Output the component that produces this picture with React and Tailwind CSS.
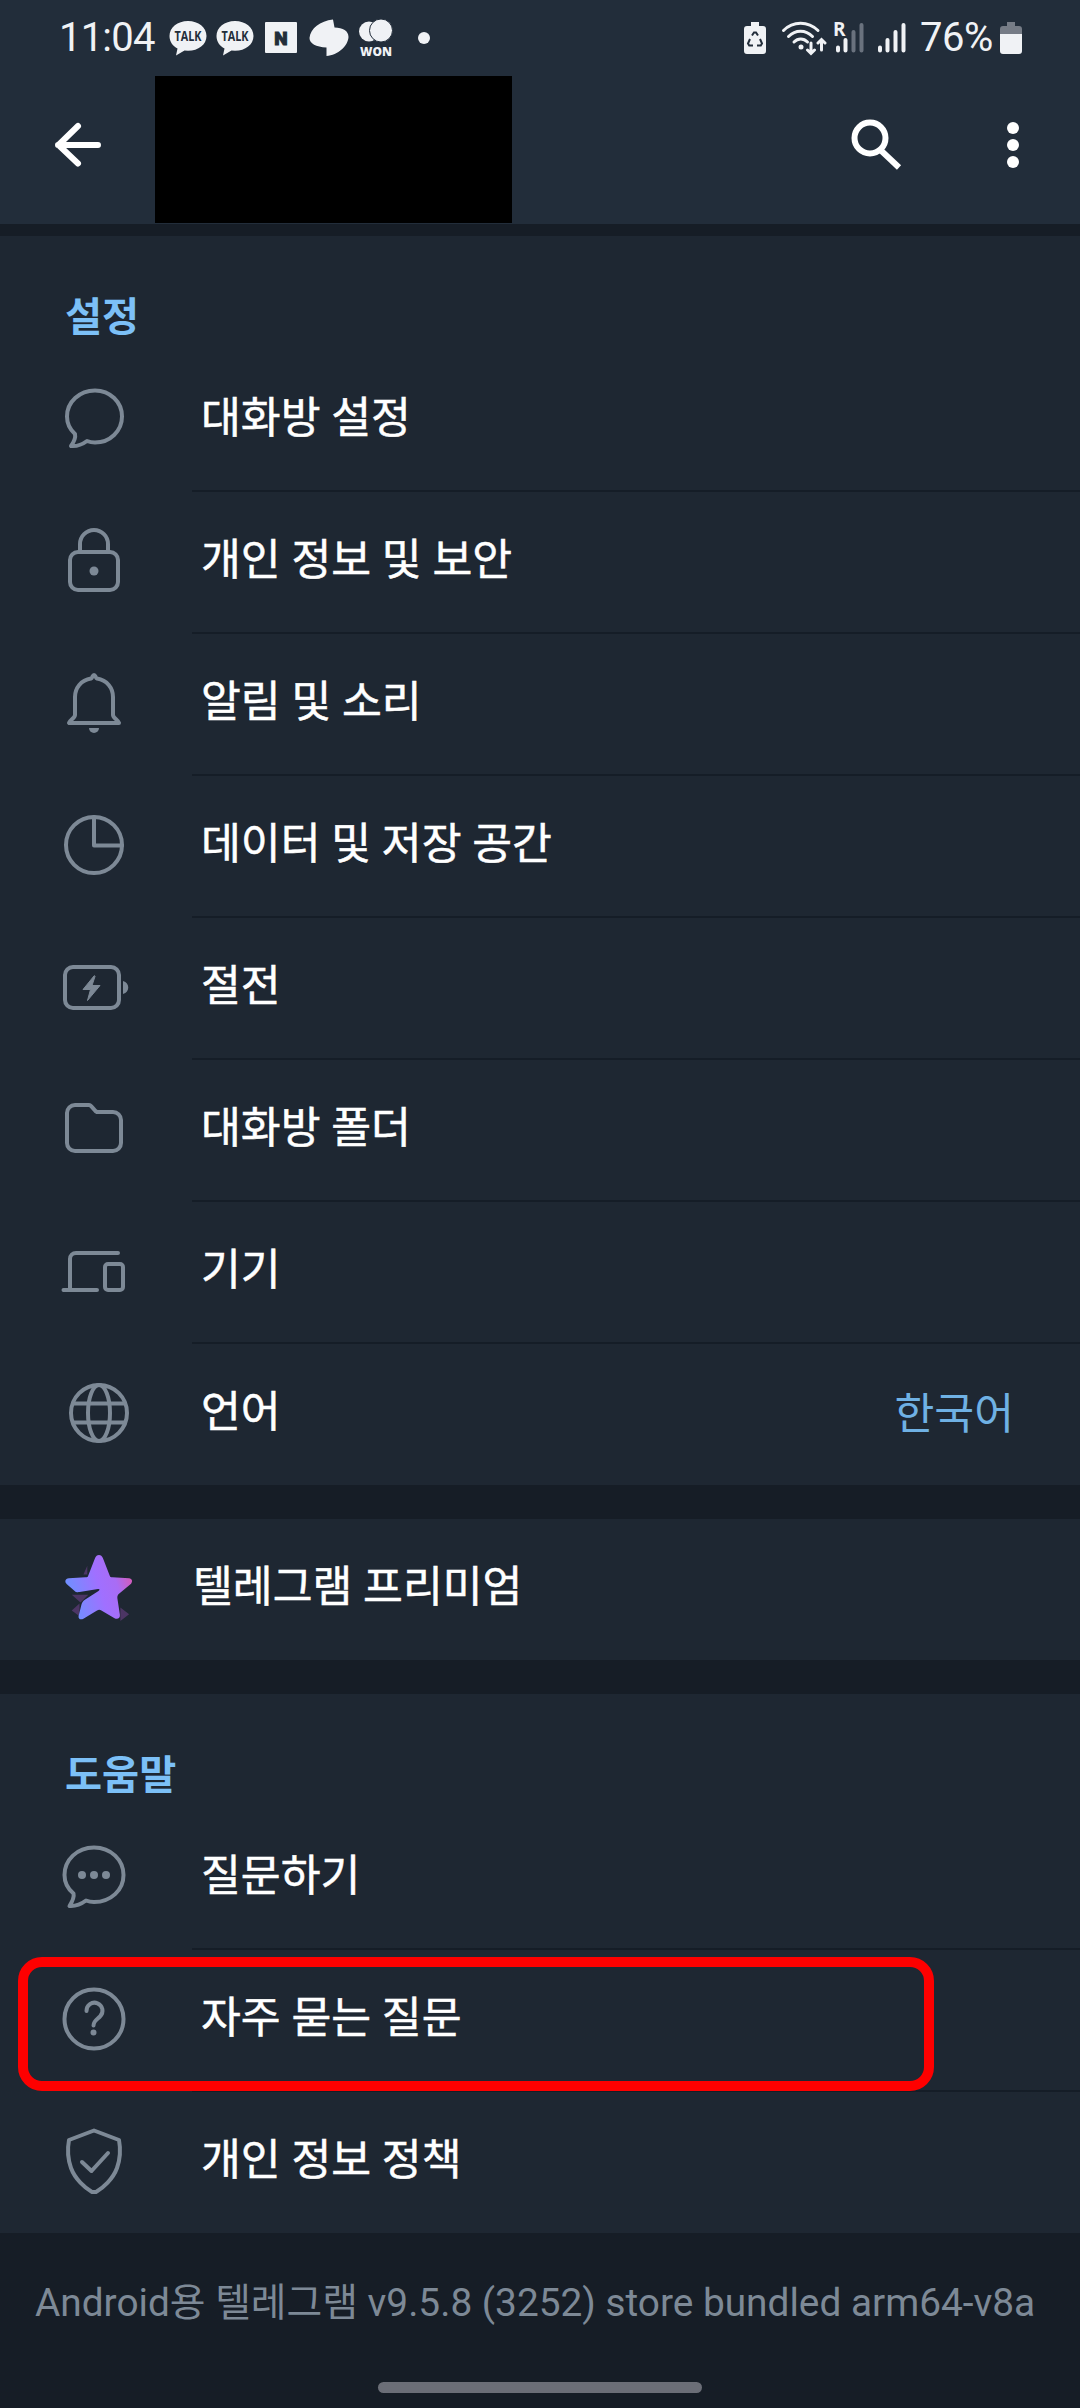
// src/App.jsx
import React from "react";

const stroke = {
  fill: "none",
  stroke: "currentColor",
  strokeWidth: 4,
  strokeLinecap: "round",
  strokeLinejoin: "round",
};

// every list icon is drawn on the same 72x72 grid
function Icon({ children }) {
  return (
    <svg viewBox="0 0 72 72" className="w-[72px] h-[72px] shrink-0 text-[#7d8996]" {...stroke}>
      {children}
    </svg>
  );
}

const icons = {
  chat: (
    <Icon>
      <path d="M37 7.500C21.500 7.500 9 19 9 33.500C9 40.500 12 46.500 17 51C18 55.500 15.500 59.500 13 63C19 63.500 25 61 29 58C31.500 59 34.500 59.500 37 59.500C52 59.500 64 48 64 33.500C64 19 52 7.500 37 7.500Z" />
    </Icon>
  ),
  lock: (
    <Icon>
      <path d="M22 27V19a14 14 0 0 1 28 0v8" />
      <rect x="12" y="27" width="48" height="38" rx="8" />
      <circle cx="36" cy="46" r="4.500" fill="currentColor" stroke="none" />
    </Icon>
  ),
  bell: (
    <Icon>
      <path d="M36 8c-1.500 0-1.500 3-3 3.500C23 13 17 21 17 30v18c0 3-5 5-6 8h50c-1-3-6-5-6-8V30c0-9-6-17-16-18.500C37.500 11 37.500 8 36 8Z" />
      <path d="M31 61h10a5 5 0 0 1-10 0Z" fill="currentColor" stroke="none" />
    </Icon>
  ),
  data: (
    <Icon>
      <circle cx="36" cy="36" r="28" />
      <path d="M36 8v28.500h28" />
    </Icon>
  ),
  battery: (
    <Icon>
      <rect x="7" y="16" width="54" height="41" rx="8" />
      <path d="M36 25 25 38.500h7.500l-3 11 12.500-15h-8l3-9Z" fill="currentColor" strokeWidth="1" />
      <path d="M65 30c7 2 7 11 0 13Z" fill="currentColor" stroke="none" />
    </Icon>
  ),
  folder: (
    <Icon>
      <path d="M17 12h14c3 0 5 6 8 7h16a8 8 0 0 1 8 8v23a8 8 0 0 1-8 8H17a8 8 0 0 1-8-8V20a8 8 0 0 1 8-8Z" />
    </Icon>
  ),
  devices: (
    <Icon>
      <path d="M60 18H18a6 6 0 0 0-6 6v31M5.500 55H39" />
      <rect x="47" y="29" width="18" height="26" rx="3" />
    </Icon>
  ),
  globe: (
    <Icon>
      <g transform="translate(5 0)">
        <circle cx="36" cy="36" r="28" />
        <ellipse cx="36" cy="36" rx="11" ry="28" />
        <path d="M10 26.500h52M10 45.500h52" />
      </g>
    </Icon>
  ),
  ask: (
    <Icon>
      <path d="M36 6.500C19 6.500 6.500 19 6.500 34C6.500 41.500 10 48 15.500 52.500C16.500 56.500 14 61 11.500 65C18 65.500 24 62.500 28 59.500C30.500 60.500 33.500 61 36 61C53 61 65.500 49 65.500 34C65.500 19 53 6.500 36 6.500Z" />
      <g fill="currentColor" stroke="none">
        <circle cx="24" cy="34" r="4" />
        <circle cx="36" cy="34" r="4" />
        <circle cx="48" cy="34" r="4" />
      </g>
    </Icon>
  ),
  faq: (
    <Icon>
      <circle cx="36" cy="36" r="29.500" />
      <path d="M28.500 28a8 8 0 1 1 13.500 5.500c-3 3-6.500 4.500-6.500 9" />
      <circle cx="35.500" cy="49.500" r="3" fill="currentColor" stroke="none" />
    </Icon>
  ),
  policy: (
    <Icon>
      <path d="M36 5.500 61 15c1.500 8 1.500 18-2 28-4 11-14 20-21 24h-4C27 63 17 54 13 43 9.500 33 9.500 23 11 15Z" />
      <path d="m24 37 9.500 9L50 28" />
    </Icon>
  ),
};

const settings = [
  { icon: "chat", label: "대화방 설정" },
  { icon: "lock", label: "개인 정보 및 보안" },
  { icon: "bell", label: "알림 및 소리" },
  { icon: "data", label: "데이터 및 저장 공간" },
  { icon: "battery", label: "절전" },
  { icon: "folder", label: "대화방 폴더" },
  { icon: "devices", label: "기기" },
  { icon: "globe", label: "언어", value: "한국어" },
];

const help = [
  { icon: "ask", label: "질문하기" },
  { icon: "faq", label: "자주 묻는 질문", marked: true },
  { icon: "policy", label: "개인 정보 정책" },
];

function Row({ icon, label, value, marked, last }) {
  return (
    <div className={"relative flex pl-[58px] " + (last ? "h-[141px]" : "h-[142px]")}>
      <div className="flex items-center pb-[4px]">{icons[icon]}</div>
      <div
        className={
          "ml-[62px] flex flex-1 items-center justify-between pl-[9px] pr-[66px] pb-[2px] border-b-2 text-[43.300px] leading-none " +
          (last ? "border-transparent" : "border-[#151d27]")
        }
      >
        <span className="text-white [-webkit-text-stroke:0.5px_white]">{label}</span>
        {value && <span className="pt-[4px] text-[#6fb1e4]">{value}</span>}
      </div>
      {marked && (
        <div className="absolute left-[18px] top-[7px] h-[134px] w-[916px] rounded-[24px] border-[10px] border-[#fe0000]" />
      )}
    </div>
  );
}

function Section({ title, items }) {
  return (
    <section className="bg-[#1e2732]">
      <h2 className="flex h-[114px] items-center pl-[65px] pt-[50px] text-[40.300px] leading-none font-bold text-[#7cc0f7]">
        {title}
      </h2>
      {items.map((it, i) => (
        <Row key={it.label} {...it} last={i === items.length - 1} />
      ))}
    </section>
  );
}

function TalkIcon() {
  return (
    <svg viewBox="0 0 38 36" className="w-[38px] h-[36px]" fill="#f0f2f5">
      <path d="M19 1C8.500 1 .5 7.500 .5 16c0 5.500 3.200 10 8 12.500L7 35.500l8.500-5 3.500.3c10.500 0 18.500-6.300 18.500-14.800S29.500 1 19 1Z" />
      <text x="19" y="20.500" textAnchor="middle" textLength="27" lengthAdjust="spacingAndGlyphs" fontSize="13.500" fontWeight="700" fontFamily="Open Sans" fill="#222d3a">
        TALK
      </text>
    </svg>
  );
}

function Signal({ roaming }) {
  return (
    <svg viewBox="-2 -8 36 50" className="w-[36px] h-[50px]" stroke="#f0f2f5" strokeWidth="4" strokeLinecap="round">
      <path d="M6 26.500v3M13.500 19v10.500" />
      <path d="M21.500 11v18.500M29.500 4v25.500" stroke={roaming ? "#6a727e" : "#f0f2f5"} />
      {roaming && (
        <text x="1" y="15" fontSize="19" fontWeight="700" fontFamily="Open Sans" fill="#f0f2f5" stroke="none">
          R
        </text>
      )}
    </svg>
  );
}

function StatusBar() {
  return (
    <div className="flex h-[76px] items-center pl-[59px] pr-[58px] font-[Roboto] text-[40px] leading-none text-[#f0f2f5]">
      <span className="w-[110px] tracking-[-0.800px]">11:04</span>
      <TalkIcon />
      <div className="ml-[9px]"><TalkIcon /></div>
      <svg viewBox="0 0 32 32" className="ml-[11px] w-[32px] h-[32px]">
        <rect width="32" height="31" rx="1" fill="#f0f2f5" />
        <text x="16" y="22.500" textAnchor="middle" fontSize="19" fontWeight="900" fontFamily="Roboto" fill="#222d3a" stroke="#222d3a">N</text>
      </svg>
      <svg viewBox="0 0 40 38" className="ml-[12px] w-[40px] h-[38px]" fill="#f0f2f5">
        <path d="M24 .5 25.500 8.500C34 8.500 39.500 12 39.500 18C39 27 29 36 17.500 37V28.500C7 28 .5 24.500 .5 19C1.500 9.500 11 2 24 .5Z" />
      </svg>
      <svg viewBox="0 -4 36 46" className="ml-[9px] w-[36px] h-[46px]" fill="#f0f2f5">
        <circle cx="11" cy="12.500" r="10" />
        <circle cx="23" cy="11.500" r="11.500" stroke="#222d3a" strokeWidth="1" />
        <text x="18" y="36.500" textAnchor="middle" textLength="32" lengthAdjust="spacingAndGlyphs" fontSize="13" fontWeight="800" fontFamily="Open Sans">WON</text>
      </svg>
      <div className="ml-[24px] h-[12px] w-[12px] rounded-full bg-[#f0f2f5]" />

      <div className="ml-auto flex items-center">
        <svg viewBox="0 0 22 32" className="w-[22px] h-[32px]" fill="#f0f2f5">
          <path d="M7 0h8v4h4a3 3 0 0 1 3 3v22a3 3 0 0 1-3 3H3a3 3 0 0 1-3-3V7a3 3 0 0 1 3-3h4Z" />
          <path d="M8 13.500l2-3h2l2 3M6 17l-2 4.500 1.200 2H9M16 17l2 4.500-1.200 2H13" fill="none" stroke="#222d3a" strokeWidth="2" />
        </svg>
        <svg viewBox="0 0 46 36" className="ml-[15px] w-[46px] h-[36px]" fill="none" stroke="#f0f2f5" strokeWidth="3" strokeLinecap="round">
          <path d="M2.500 10.500C12 .8 27 .8 37 10.500M7.500 16.500c7-7 17-7 24 0M13 22c4-4 9.500-4 13.500 0" />
          <circle cx="20" cy="27" r="2.500" fill="#f0f2f5" stroke="none" />
          <path d="M30 23v10M26.500 30l3.500 3.500 3.500-3.500M40.500 30V20M37 23l3.500-3.500L44 23" />
        </svg>
        <div className="ml-[3px]"><Signal roaming /></div>
        <div className="ml-[6px]"><Signal /></div>
        <span className="ml-[12px] w-[80px] tracking-[-0.500px]">76%</span>
        <svg viewBox="0 0 22 32" className="w-[22px] h-[32px]" fill="#f0f2f5">
          <path d="M7 0h8v4h4a3 3 0 0 1 3 3v5H0V7a3 3 0 0 1 3-3h4Z" fill="#767c86" />
          <path d="M0 12h22v17a3 3 0 0 1-3 3H3a3 3 0 0 1-3-3Z" />
        </svg>
      </div>
    </div>
  );
}

function Header() {
  return (
    <header className="h-[224px] bg-[#222d3a]">
      <StatusBar />
      <div className="flex h-[147px] pl-[52px] pr-[58px]">
        <svg viewBox="0 0 52 52" className="mt-[43px] w-[52px] h-[52px]" fill="none" stroke="#fff" strokeWidth="6" strokeLinecap="round" strokeLinejoin="round">
          <path d="M46 26H6M26 7 6.500 26 26 44.500" />
        </svg>
        <div className="ml-[51px] w-[357px] bg-black" />
        <svg viewBox="0 0 52 52" className="ml-auto mt-[43px] w-[52px] h-[52px]" fill="none" stroke="#fff" strokeWidth="6">
          <circle cx="20" cy="19" r="15.500" />
          <path d="M31.500 32 49 48.500" />
        </svg>
        <svg viewBox="0 0 18 52" className="ml-[102px] mt-[43px] w-[18px] h-[52px]" fill="#fff">
          <circle cx="9" cy="9" r="6" />
          <circle cx="9" cy="26" r="6" />
          <circle cx="9" cy="43" r="6" />
        </svg>
      </div>
    </header>
  );
}

function PremiumStar() {
  return (
    <svg viewBox="0 0 74 72" className="w-[72px] h-[70px]">
      <defs>
        <linearGradient id="star" x1="0" y1=".6" x2="1" y2=".3">
          <stop offset="0" stopColor="#6b93ff" />
          <stop offset=".5" stopColor="#a070ff" />
          <stop offset=".75" stopColor="#a96cf4" />
          <stop offset="1" stopColor="#d85ab4" />
        </linearGradient>
      </defs>
      <path d="M10 42h17l-8 8Zm8 9v13l-8-6Zm42 4 9 7-9 7ZM26 12v9h-4Z" fill="#573a70" opacity=".8" />
      <path
        d="M38 1c-2 0-3 1-4 3l-7 18c-.5 1.500-1 2-3 2L7 25c-4 .5-4.500 4-2 6l8 7c1.500 1.500 3 1.500 5 1.200L37 36c2-.3 2 1 .5 2l-14 9c-2 1.500-3 3-3.500 5l-3 12c-.5 3 2.500 4 5 2.500L36 58c1.500-1 3-1 4.500 0L54 66c3 1.500 6 0 5.500-3.500L57 46c-.3-2 0-3 1-4.500l13-11c2-2.500 1-5-2-5.500l-17-1c-2 0-2.500-.5-3-2L42 4c-1-2-2-3-4-3Z"
        fill="url(#star)"
      />
    </svg>
  );
}

export default function App() {
  return (
    <div className="h-[2408px] w-[1080px] overflow-hidden bg-[#161d26] font-[Roboto,'Noto_Sans_CJK_KR',sans-serif]">
      <Header />
      <div className="h-[12px] bg-[#161d26]" />
      <Section title="설정" items={settings} />
      <div className="h-[34px]" />
      <div className="flex h-[141px] items-center bg-[#1e2732] pl-[62px]">
        <div className="pb-[2px]"><PremiumStar /></div>
        <span className="ml-[59px] pb-[4px] text-[43.300px] leading-none text-white [-webkit-text-stroke:0.5px_white]">텔레그램 프리미엄</span>
      </div>
      <div className="h-[34px]" />
      <Section title="도움말" items={help} />
      <footer className="flex h-[149px] items-center pl-[35px] pb-[9px] text-[38.800px] leading-none whitespace-nowrap text-[#7d8996]">
        Android용 텔레그램 v9.5.8 (3252) store bundled arm64-v8a
      </footer>
      <div className="mx-auto h-[11px] w-[324px] rounded-full bg-[#6b6e77]" />
    </div>
  );
}
